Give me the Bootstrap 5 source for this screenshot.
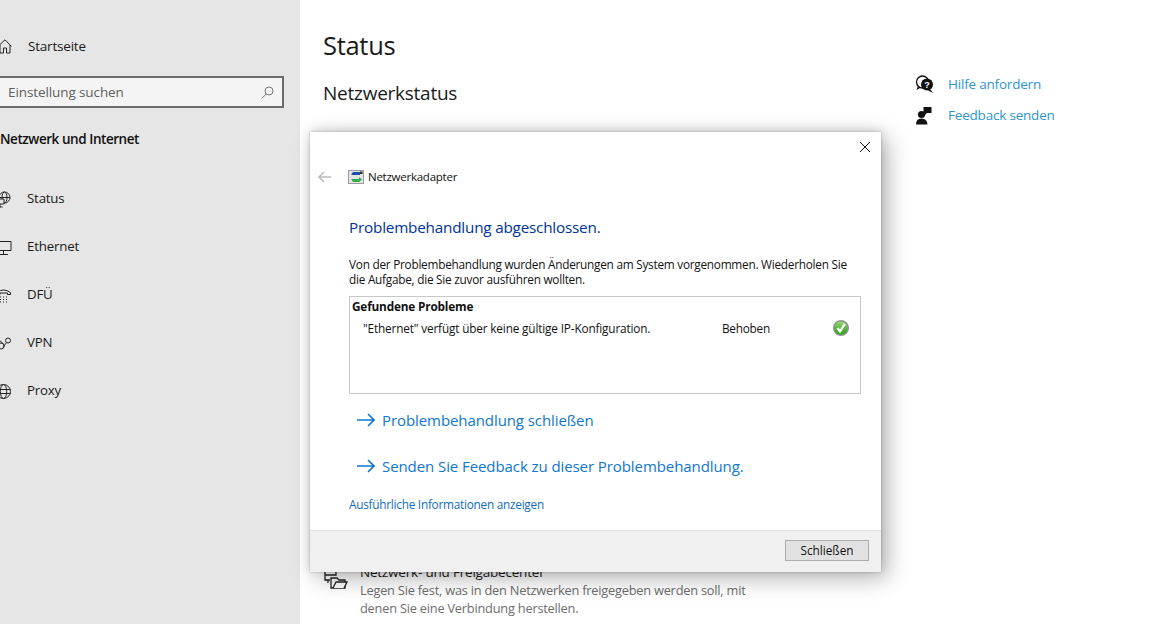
<!DOCTYPE html>
<html lang="de">
<head>
<meta charset="utf-8">
<title>Status</title>
<link href="https://cdn.jsdelivr.net/npm/bootstrap@5.3.0/dist/css/bootstrap.min.css" rel="stylesheet">
<style>
html,body{height:624px;overflow:hidden}
body{font-family:"Open Sans","Noto Sans",sans-serif;color:#1a1a1a;background:#fff;position:relative;letter-spacing:-.2px}
.side-pane{width:300px;height:624px;background:#e6e6e6;flex:none;overflow:hidden;padding-top:32px}
.side-row{height:28px;font-size:13.5px;margin-left:-2px}
.side-row svg{flex:none;margin-right:16px}
.search-box{width:288px;height:32px;margin:16px 0 0 -4px;border:2px solid #6b6b6b;background:#f4f4f4;font-size:13.5px;color:#5f5f5f;padding:0 8px 0 10px;letter-spacing:-.1px}
.side-title{font-size:13.5px;font-weight:600;margin:21px 0 0;height:20px;line-height:20px;color:#111;letter-spacing:-.45px}
.nav-line{height:48px;font-size:13.3px;margin-left:-5px}
.nav-list{margin-top:26px}
.nav-line svg{flex:none;margin-right:15px}
.main-pane{padding:0 0 0 23px;min-width:0;width:600px}
.page-title{font-size:25.5px;font-weight:400;margin:27px 0 0;line-height:36px;letter-spacing:-.3px}
.sub-title{font-size:19px;font-weight:400;margin:16px 0 0;line-height:28px;letter-spacing:-.25px}
.foot-item{margin-top:455px}
.foot-pic{flex:none;margin:8px 12px 0 1px}
.foot-name{font-size:13.5px;line-height:20px;color:#1a1a1a}
.foot-desc{font-size:12.8px;line-height:18px;color:#6d6d6d;width:400px;letter-spacing:-.22px;margin-top:-1px}
.help-pane{position:absolute;left:915px;top:69px;font-size:13.5px;color:#2d96cf}
.help-row{height:31px}
.help-row svg{margin-right:13px;flex:none}
.dlg{position:absolute;left:310px;top:132px;width:571px;height:440px;background:#fff;box-shadow:0 0 2px rgba(0,0,0,.25),6px 6px 22px rgba(0,0,0,.3),0 -2px 10px rgba(0,0,0,.12);color:#111;font-size:11.8px;letter-spacing:-.25px;z-index:2}
.dlg-body{height:398px;padding-left:39px;padding-right:20px}
.close-x{position:absolute;left:549px;top:9px;line-height:0}
.dlg-top{padding:37px 0 0 8px;margin-left:-39px}
.dlg-head{font-size:11.5px;line-height:16px;letter-spacing:-.25px}
.dlg-heading{font-size:15.3px;line-height:20px;color:#003399;margin-top:32px;letter-spacing:-.22px}
.dlg-text{line-height:15px;margin-top:20px;width:510px}
.found-box{border:1px solid #c8c8c8;height:98px;margin-top:9px;padding:1px 2px}
.found-head{font-weight:700;line-height:17px;font-size:11.8px;letter-spacing:-.18px}
.found-line{margin-top:5px;padding-left:11px;line-height:16px}
.found-msg{width:359px;letter-spacing:-.16px}
.found-state{width:111px}
.act-link{font-size:15px;color:#0f77d0;line-height:20px;padding-left:8px;letter-spacing:-.08px}
.act-link svg{margin-right:7px;flex:none}
.act-one{margin-top:16px}
.act-two{margin-top:26px}
.more-link{color:#0f6cbd;line-height:16px;margin-top:20px}
.dlg-foot{height:42px;background:#f0f0f0;border-top:1px solid #dfdfdf;padding:9px 12px 0 0}
.close-btn{width:84px;height:21px;border:1px solid #adadad;background:#e1e1e1;font-size:11.8px;line-height:19px;text-align:center;color:#111;padding:0;border-radius:0}
</style>
</head>
<body>
<div class="d-flex">
  <aside class="side-pane">
    <div class="side-row d-flex align-items-center">
      <svg width="14" height="15" viewBox="0 0 14 15" fill="none" stroke="#222" stroke-width="1"><path d="M0 7.500 7 .8l6.500 6.700M2 6v8h3.500V9h3v5H12V6"/></svg>
      <span>Startseite</span>
    </div>
    <div class="search-box d-flex align-items-center justify-content-between">
      <span>Einstellung suchen</span>
      <svg width="13" height="13" viewBox="0 0 13 13" fill="none" stroke="#777" stroke-width="1"><circle cx="8" cy="5" r="4"/><path d="M5.200 8 .8 12.400"/></svg>
    </div>
    <div class="side-title">Netzwerk und Internet</div>
    <div class="nav-list">
      <div class="nav-line d-flex align-items-center">
        <svg width="17" height="17" viewBox="0 0 17 17" fill="none" stroke="#222" stroke-width="1"><circle cx="9.500" cy="6.500" r="5.500"/><ellipse cx="9.500" cy="6.500" rx="2.500" ry="5.500"/><path d="M4 6.500h11"/><path d="M1 8h8v5H1zM5 13v3M2.500 16h5" fill="#e6e6e6"/></svg>
        <span>Status</span>
      </div>
      <div class="nav-line d-flex align-items-center">
        <svg width="17" height="17" viewBox="0 0 17 17" fill="none" stroke="#222" stroke-width="1"><path d="M1 2.500h15v9H1zM8.500 11.500v3.500M4 15.500h9"/></svg>
        <span>Ethernet</span>
      </div>
      <div class="nav-line d-flex align-items-center">
        <svg width="17" height="17" viewBox="0 0 17 17" fill="none" stroke="#222" stroke-width="1"><path d="M2 7.500V5.500Q8.500 .5 15.500 5.500V7.500h-3V6H5v1.500z"/><path d="M5 10h1M8 10h1M11 10h1M5 12.500h1M8 12.500h1M11 12.500h1M5 15h1M8 15h1M11 15h1"/></svg>
        <span>DFÜ</span>
      </div>
      <div class="nav-line d-flex align-items-center">
        <svg width="17" height="17" viewBox="0 0 17 17" fill="none" stroke="#222" stroke-width="1"><circle cx="13" cy="5.500" r="2.500"/><circle cx="6" cy="11" r="3"/><path d="M4 5 8.500 9M8 13l3-5"/></svg>
        <span>VPN</span>
      </div>
      <div class="nav-line d-flex align-items-center">
        <svg width="17" height="17" viewBox="0 0 17 17" fill="none" stroke="#222" stroke-width="1"><circle cx="8.500" cy="8.500" r="7"/><ellipse cx="8.500" cy="8.500" rx="3.200" ry="7"/><path d="M1.500 6.500h14M1.500 10.500h14"/></svg>
        <span>Proxy</span>
      </div>
    </div>
  </aside>
  <main class="main-pane">
    <h1 class="page-title">Status</h1>
    <h2 class="sub-title">Netzwerkstatus</h2>
    <div class="foot-item d-flex">
      <svg class="foot-pic" width="24" height="20" viewBox="0 0 24 20" fill="none" stroke="#222" stroke-width="1.300"><path d="M1 1h11v4H1zM1 5v5h5M4 10v3"/><path d="M7 8h6l2 2h6v8H7z"/><path d="M9 18l3-6h11l-3 6" fill="#fff"/></svg>
      <div>
        <div class="foot-name">Netzwerk- und Freigabecenter</div>
        <div class="foot-desc">Legen Sie fest, was in den Netzwerken freigegeben werden soll, mit denen Sie eine Verbindung herstellen.</div>
      </div>
    </div>
  </main>
</div>

<div class="help-pane">
  <div class="help-row d-flex align-items-center">
    <svg width="20" height="19" viewBox="0 0 20 19"><circle cx="7.500" cy="7" r="6" fill="#fff" stroke="#111" stroke-width="1.300"/><path d="M3 11 1.500 15 6 12.500z" fill="#111"/><circle cx="12" cy="9.500" r="6" fill="#111"/><path d="m15 14 3 4-5-2.500z" fill="#111"/><text x="12" y="13" font-size="9" font-weight="700" text-anchor="middle" fill="#fff" font-family="Liberation Sans">?</text></svg>
    <span>Hilfe anfordern</span>
  </div>
  <div class="help-row d-flex align-items-center">
    <svg width="20" height="19" viewBox="0 0 20 19" fill="#111"><circle cx="6.500" cy="8.500" r="3.600"/><path d="M1 18.500q0-6 5.500-6t6 6z"/><path d="M8.500 1H16.500V7H12l-2 2V7H8.500z"/></svg>
    <span>Feedback senden</span>
  </div>
</div>

<section class="dlg">
  <div class="close-x">
    <svg width="12" height="12" viewBox="0 0 12 12" stroke="#111" stroke-width="1"><path d="M1 1l10 10M11 1 1 11"/></svg>
  </div>
  <div class="dlg-body">
    <div class="dlg-top d-flex align-items-center">
      <svg class="me-3" width="14" height="12" viewBox="0 0 14 12" fill="none" stroke="#bdbdbd" stroke-width="1.600"><path d="M13 6H1.500M6 1 1 6l5 5"/></svg>
      <svg class="me-1" width="16" height="14" viewBox="0 0 16 14"><rect x=".5" y=".5" width="15" height="13" fill="#e4e4e4" stroke="#9a9a9a"/><path d="M3 4.500 5 2h7v3H5z" fill="#1d4fa8"/><rect x="12" y="1.500" width="2.500" height="2.500" fill="#333"/><path d="M3 9h8V7l3 2.500-3 2.500H5z" fill="#2fae4d"/></svg>
      <span class="dlg-head">Netzwerkadapter</span>
    </div>
    <div class="dlg-heading">Problembehandlung abgeschlossen.</div>
    <div class="dlg-text">Von der Problembehandlung wurden Änderungen am System vorgenommen. Wiederholen Sie die Aufgabe, die Sie zuvor ausführen wollten.</div>
    <div class="found-box">
      <div class="found-head">Gefundene Probleme</div>
      <div class="found-line d-flex align-items-center">
        <span class="found-msg">"Ethernet" verfügt über keine gültige IP-Konfiguration.</span>
        <span class="found-state">Behoben</span>
        <svg width="16" height="16" viewBox="0 0 16 16"><defs><linearGradient id="grn" x1="0" y1="0" x2="0" y2="1"><stop offset="0" stop-color="#a6dc7e"/><stop offset=".5" stop-color="#58b93a"/><stop offset="1" stop-color="#2c9a1c"/></linearGradient></defs><circle cx="8" cy="8" r="7.300" fill="url(#grn)" stroke="#8f948f" stroke-width="1.400"/><path d="M4.500 8 7 11.500 11.800 3.800" fill="none" stroke="#fff" stroke-width="2.200"/></svg>
      </div>
    </div>
    <div class="act-link act-one d-flex align-items-center">
      <svg width="18" height="14" viewBox="0 0 18 14" fill="none" stroke="#0f77d0" stroke-width="1.600"><path d="M0 7h17M11 1l6 6-6 6"/></svg>
      <span>Problembehandlung schließen</span>
    </div>
    <div class="act-link act-two d-flex align-items-center">
      <svg width="18" height="14" viewBox="0 0 18 14" fill="none" stroke="#0f77d0" stroke-width="1.600"><path d="M0 7h17M11 1l6 6-6 6"/></svg>
      <span>Senden Sie Feedback zu dieser Problembehandlung.</span>
    </div>
    <div class="more-link">Ausführliche Informationen anzeigen</div>
  </div>
  <div class="dlg-foot d-flex justify-content-end">
    <button type="button" class="btn close-btn">Schließen</button>
  </div>
</section>
<script src="https://cdn.jsdelivr.net/npm/bootstrap@5.3.0/dist/js/bootstrap.bundle.min.js"></script>
</body>
</html>
